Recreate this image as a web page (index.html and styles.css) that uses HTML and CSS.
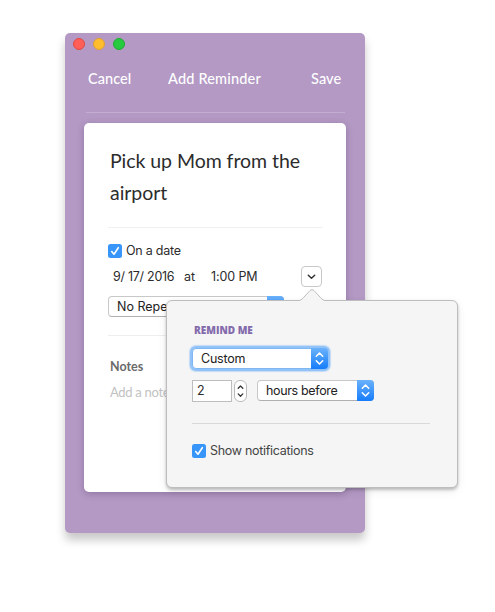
FILE: index.html
```html
<!DOCTYPE html>
<html lang="en">
<head>
<meta charset="utf-8">
<title>Add Reminder</title>
<link rel="stylesheet" href="styles.css">
</head>
<body>
<main class="window">
  <div class="lights"><i class="light close"></i><i class="light minimize"></i><i class="light expand"></i></div>
  <header class="toolbar"><span class="cancel">Cancel</span><span class="heading">Add Reminder</span><span class="save">Save</span></header>
  <section class="card">
    <h1 class="title">Pick up Mom from the<br>airport</h1>
    <div class="date-section">
      <label class="check-row"><svg class="check" viewBox="0 0 14 14"><rect width="14" height="14" rx="2.5"/><path d="M3.7 7.5 6 10.2 10.3 3.7"/></svg><span class="date-label">On a date</span></label>
      <div class="when"><span class="date">9/ 17/ 2016</span><span class="at">at</span><span class="time">1:00 PM</span>
        <button class="disclose"><svg width="9" height="6" viewBox="0 0 9 6"><path d="M1.3 1.2 4.5 4.2 7.7 1.2"/></svg></button>
      </div>
      <div class="select repeat"><span>No Repeat</span><i class="stepper"></i></div>
    </div>
    <div class="notes"><h2>Notes</h2><p>Add a note</p></div>
  </section>

  <aside class="popover">
    <svg class="arrow" width="26" height="13" viewBox="0 0 26 13"><path class="arrow-fill" d="M0 12.5C3 12 4 10 6 8L11 2.5Q13 .5 15 2.5L20 8C22 10 23 12 26 12.5V13H0Z"/><path class="arrow-line" d="M0 12.5C3 12 4 10 6 8L11 2.5Q13 .5 15 2.5L20 8C22 10 23 12 26 12.5"/></svg>
    <h3 class="remind">REMIND ME</h3>
    <div class="select custom"><span>Custom</span><i class="stepper"><svg viewBox="0 0 17 21"><path d="M5.3 8.3 8.5 5 11.7 8.3M5.3 12.7 8.5 16 11.7 12.7"/></svg></i></div>
    <div class="amount">
      <div class="number">2</div>
      <div class="spinner"><svg width="11" height="20" viewBox="0 0 11 20"><path d="M3.2 7.3 5.5 5 7.8 7.3M3.2 12.9 5.5 15.2 7.8 12.9"/></svg></div>
      <div class="select unit"><span>hours before</span><i class="stepper"><svg viewBox="0 0 17 21"><path d="M5.3 8.3 8.5 5 11.7 8.3M5.3 12.7 8.5 16 11.7 12.7"/></svg></i></div>
    </div>
    <label class="check-row notify"><svg class="check" viewBox="0 0 14 14"><rect width="14" height="14" rx="2.5"/><path d="M3.7 7.5 6 10.2 10.3 3.7"/></svg><span class="notify-label">Show notifications</span></label>
  </aside>
</main>
</body>
</html>
```

FILE: styles.css
```css
* { box-sizing: border-box; }
body { height: 612px; margin: 0; padding: 33px 0 0 65px; background: #fff; font: 12.5px/16px Inter, "Liberation Sans", sans-serif; color: #2c2c2c; }
h1, h2, h3, p { margin: 0; font-weight: 400; }
span, h1, h3, p { white-space: nowrap; }

.window { position: relative; width: 300px; height: 500px; padding: 5px 19px 0; border-radius: 5px; background: #b399c4; box-shadow: 0 7px 10px rgba(0, 0, 0, .22); }
.lights { display: flex; gap: 8px; height: 12px; margin-left: -11px; }
.light { width: 12px; height: 12px; border: 1px solid; border-radius: 50%; }
.close { background: #ff5f57; border-color: #df4943; }
.minimize { background: #ffbd2e; border-color: #dea034; }
.expand { background: #27c93f; border-color: #1eab32; }
.toolbar { display: flex; align-items: flex-start; width: 259px; height: 63px; margin-left: 2px; padding-top: 20px; border-bottom: 1px solid #c3aed1; color: #fff; font: 500 14.5px/18px Lato, sans-serif; }
.cancel { width: 80px; margin-left: 2px; letter-spacing: .05px; }
.heading { width: 143px; letter-spacing: .18px; }
.save { letter-spacing: .1px; }

.card { width: 262px; height: 369px; margin-top: 10px; padding: 22px 23px 0 24px; border-radius: 5px; background: #fff; box-shadow: 0 2px 7px rgba(70, 40, 90, .3); }
.title { height: 83px; padding-left: 2px; font: 400 19.5px/32px Lato, sans-serif; letter-spacing: -.05px; border-bottom: 1px solid #f0f0f0; }
.date-section { height: 108px; padding-top: 15px; border-bottom: 1px solid #eee; }
.check-row { display: flex; align-items: center; gap: 4px; height: 16px; }
.check { width: 14px; height: 14px; flex: none; }
.check rect { fill: #3896fb; }
.check path { fill: none; stroke: #fff; stroke-width: 1.6; stroke-linecap: round; stroke-linejoin: round; }
.date-label { letter-spacing: -.25px; }
.when { display: flex; align-items: center; height: 21px; margin-top: 7px; padding-left: 5px; }
.date { width: 71px; letter-spacing: -.27px; }
.at { width: 27px; }
.time { width: 90px; letter-spacing: -.1px; }
.disclose { display: grid; place-items: center; flex: none; width: 21px; height: 21px; padding: 0; background: #fff; border: 1px solid #c8c8c8; border-radius: 4px; }
.disclose path, .spinner path { fill: none; stroke: #333; stroke-width: 1.5; stroke-linecap: round; stroke-linejoin: round; }
.spinner path { stroke-width: 1.3; }
.select { display: flex; align-items: center; justify-content: space-between; height: 21px; padding-left: 8px; background: #fff; border: 1px solid #c8c8c8; border-bottom-color: #b0b0b0; border-radius: 4px; color: #222; }
.repeat { width: 176px; margin-top: 9px; }
.stepper { flex: none; width: 17px; height: 21px; margin: -1px; border-radius: 0 4px 4px 0; background: linear-gradient(#6bb2fb, #157cfb); }
.stepper svg { display: block; width: 17px; height: 21px; }
.stepper path { fill: none; stroke: #fff; stroke-width: 1.5; stroke-linecap: round; stroke-linejoin: round; }
.notes { padding: 23px 2px; color: #c2c2c2; }
.notes h2 { font: 700 12.5px/16px Lato, sans-serif; color: #6b6b6b; }
.notes p { margin-top: 9px; font: 13px/16px Lato, sans-serif; letter-spacing: -.3px; }

.popover { position: absolute; left: 101px; top: 267px; width: 292px; height: 188px; padding: 21px 27px 0 25px; background: #f5f5f5; border: 1px solid #bdbdc0; border-radius: 6px; box-shadow: 0 2px 3px rgba(0, 0, 0, .22), 0 3px 10px rgba(0, 0, 0, .08); }
.arrow { position: absolute; left: 132px; top: -13px; }
.arrow-fill { fill: #f5f5f5; }
.arrow-line { fill: none; stroke: #bdbdc0; }
.remind { margin-left: 2px; font: 800 10px/16px "Open Sans", sans-serif; letter-spacing: 0; color: #836bab; }
.custom { width: 136px; margin-top: 10px; border-color: #80b7f3; box-shadow: 0 0 0 2px #92c3f8, 0 0 1px 3px rgba(146, 195, 248, .5); }
.custom span { letter-spacing: -.2px; }
.amount { display: flex; align-items: flex-start; height: 44px; margin-top: 10px; padding-top: 1px; }
.number { width: 40px; height: 22px; padding: 2px 4px; background: #fff; border: 1px solid #bdbdbd; }
.spinner { width: 13px; height: 22px; margin-left: 2px; background: #fff; border: 1px solid #bbb; border-radius: 6px; }
.spinner svg { display: block; }
.unit { width: 117px; margin-left: 10px; }
.unit span { letter-spacing: -.35px; }
.notify { height: 35px; padding-top: 20px; border-top: 1px solid #dadada; color: #444; }
.notify-label { letter-spacing: -.3px; }
```
